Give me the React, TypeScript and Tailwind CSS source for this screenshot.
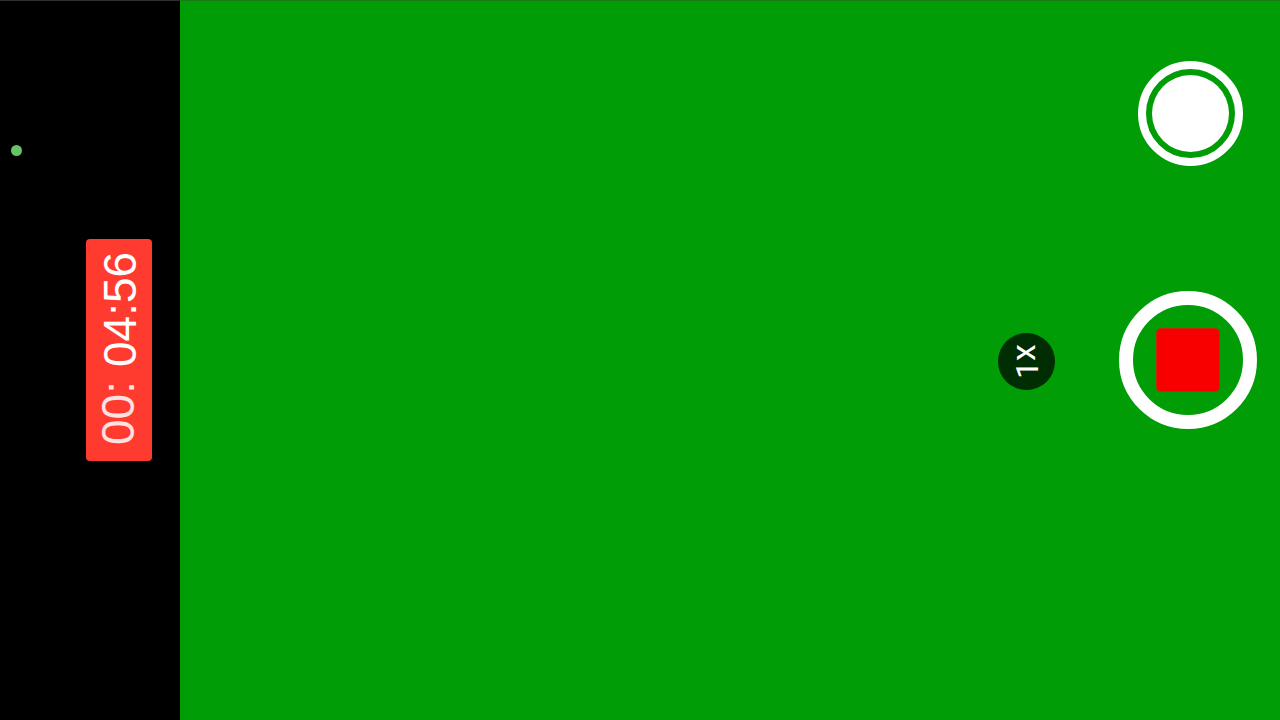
function StatusBar() {
  return (
    <aside className="flex w-45 shrink-0 border-t border-[#303030] bg-black">
      <div className="w-[86px] pt-36 pl-[11px]">
        <div role="img" aria-label="Camera in use" className="size-[11px] rounded-full bg-[#66c466]" />
      </div>
      <div className="flex flex-col justify-center pb-[22px]">
        <div
          role="timer"
          className="flex h-[222px] w-[66px] rotate-180 items-start gap-3.5 rounded-[4px] bg-[#ff3b30] pt-4 pr-2 text-[46px] leading-[48px] text-white [writing-mode:vertical-rl]"
        >
          <span className="text-white/85">00:</span>
          <span className="pr-0.5">04:56</span>
        </div>
      </div>
    </aside>
  );
}

function ZoomButton() {
  return (
    <button
      type="button"
      aria-label="Zoom 1x"
      className="flex size-[57px] rotate-180 items-center justify-center rounded-full bg-[#012d02] font-[Roboto,sans-serif] text-[32px] leading-8 text-white [writing-mode:vertical-rl]"
    >
      <span>1</span>
      <span className="pl-2 text-[34px]">x</span>
    </button>
  );
}

function CaptureControls() {
  return (
    <div className="grid grid-rows-[1fr_auto_1fr] justify-items-center">
      <div className="pt-[60px] pl-[5px]">
        <button
          type="button"
          aria-label="Take photo"
          className="flex size-[105px] items-center justify-center rounded-full border-8 border-white"
        >
          <span className="size-[77px] rounded-full bg-white" />
        </button>
      </div>
      <button
        type="button"
        aria-label="Stop recording"
        className="flex size-[138px] items-center justify-center rounded-full border-[14px] border-white"
      >
        <span className="size-16 rounded-[5px] border border-[#c52a00] bg-[#f80000]" />
      </button>
    </div>
  );
}

export default function App() {
  return (
    <div className="flex min-h-screen bg-[#019d06] font-['Liberation_Sans',Arial,sans-serif]">
      <StatusBar />
      <main className="flex grow justify-end gap-16 border-t border-[#1c7a14] pr-[23px] pb-px">
        <div className="flex items-center pt-[3px]">
          <ZoomButton />
        </div>
        <CaptureControls />
      </main>
    </div>
  );
}
